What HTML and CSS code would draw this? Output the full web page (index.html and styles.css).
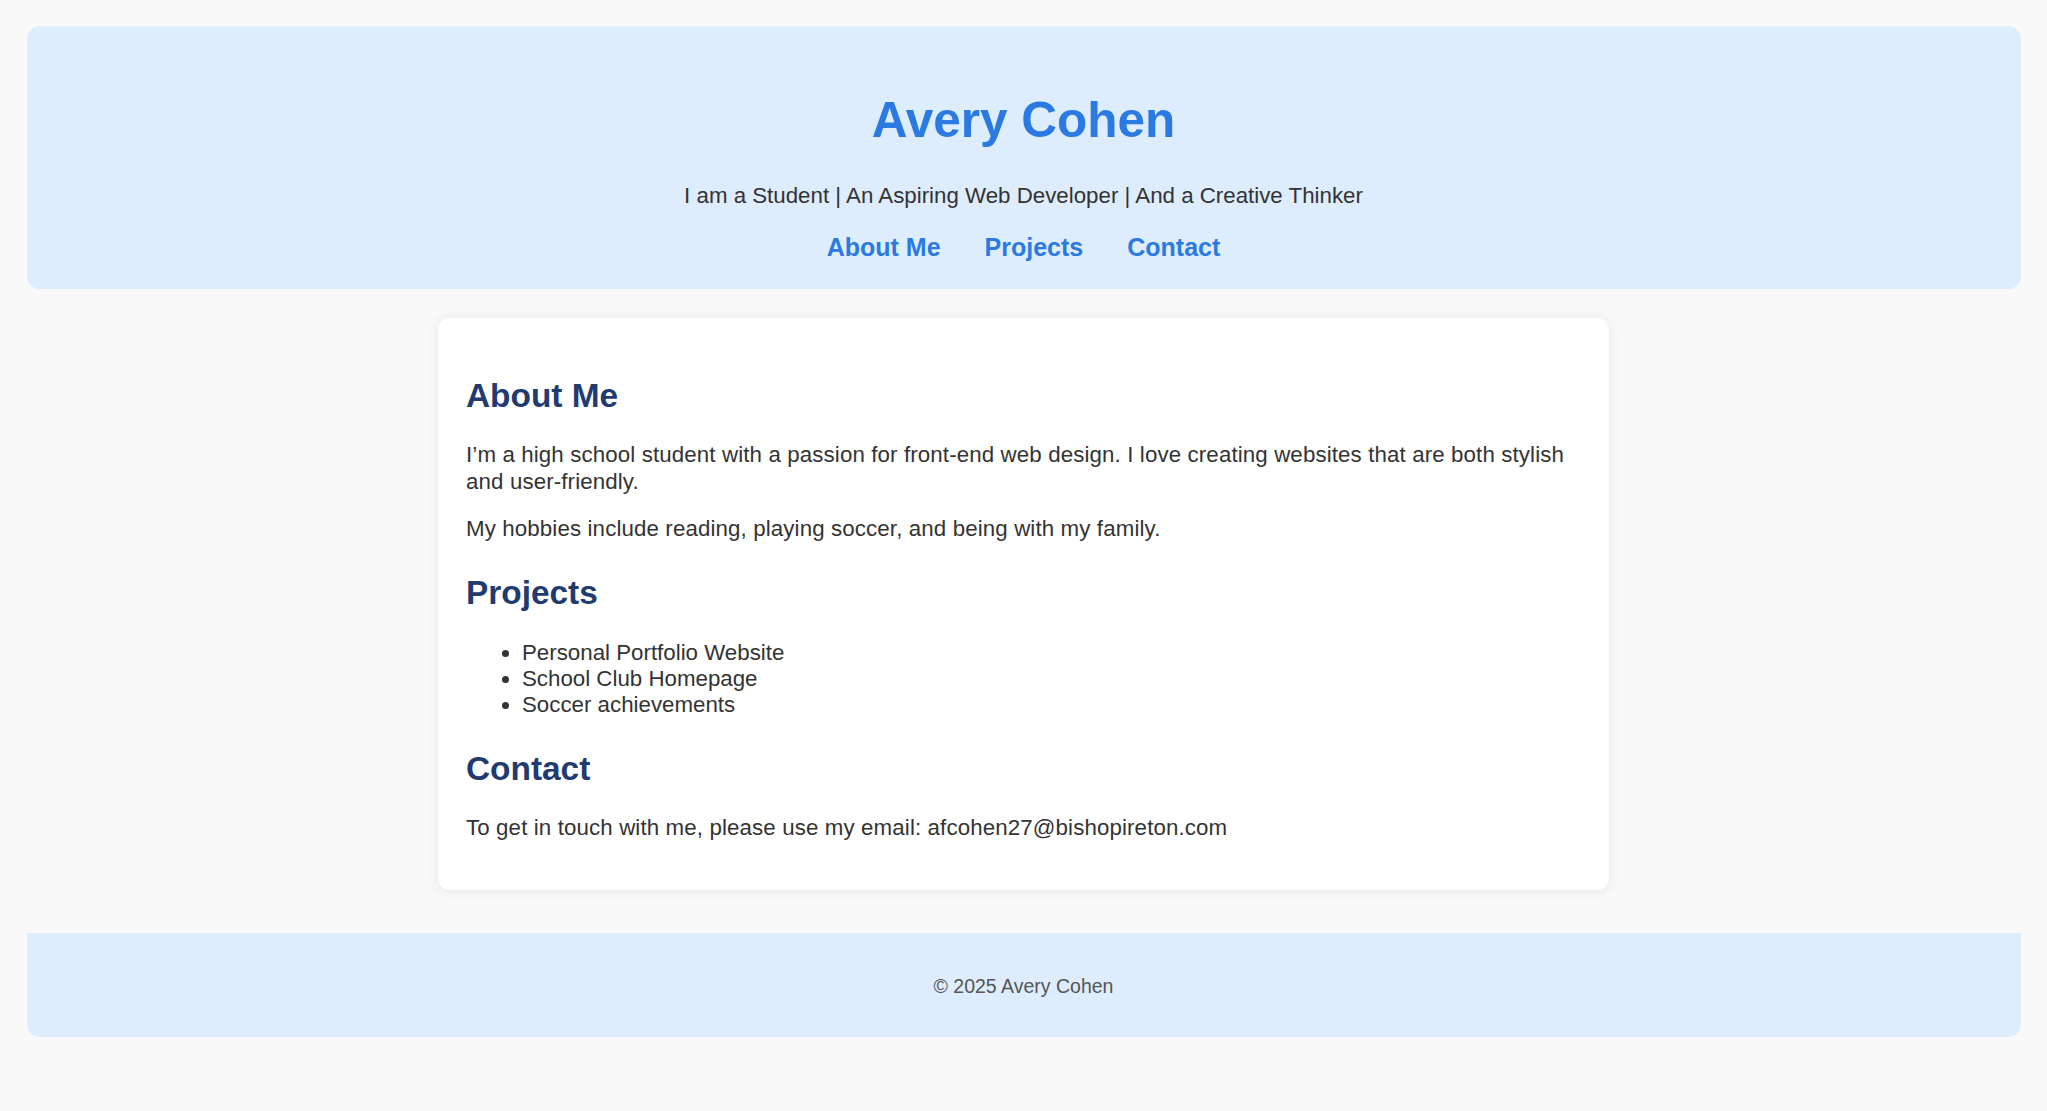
FILE: index.html
```html
<!DOCTYPE html>
<html lang="en">
<head>
<meta charset="utf-8">
<title>Avery Cohen</title>
<link rel="stylesheet" href="styles.css">
</head>
<body>
<header class="site-header">
  <h1 class="name">Avery Cohen</h1>
  <p class="tagline">I am a Student | An Aspiring Web Developer | And a Creative Thinker</p>
  <nav class="nav">
    <a href="#about">About Me</a>
    <a href="#projects">Projects</a>
    <a href="#contact">Contact</a>
  </nav>
</header>
<main class="card">
  <section id="about">
    <h2 class="section-title">About Me</h2>
    <p class="text">I’m a high school student with a passion for front-end web design. I love creating websites that are both stylish and user-friendly.</p>
    <p class="text">My hobbies include reading, playing soccer, and being with my family.</p>
  </section>
  <section id="projects">
    <h2 class="section-title">Projects</h2>
    <ul class="list">
      <li>Personal Portfolio Website</li>
      <li>School Club Homepage</li>
      <li>Soccer achievements</li>
    </ul>
  </section>
  <section id="contact">
    <h2 class="section-title">Contact</h2>
    <p class="text">To get in touch with me, please use my email: afcohen27@bishopireton.com</p>
  </section>
</main>
<footer class="site-footer">
  <p class="copy">© 2025 Avery Cohen</p>
</footer>
</body>
</html>
```

FILE: styles.css
```css
html, body {
  background: #f9f9f9;
}
body {
  margin: 26px 26.5px;
  font-family: "Liberation Sans", Arial, Helvetica, sans-serif;
  font-size: 22.3px;
  line-height: 26.5px;
  color: #333;
}
.site-header {
  background: #deedfe;
  border-radius: 13px;
  padding: 26px 26px 26.7px;
  text-align: center;
}
.name {
  margin: 39px 0 35px;
  font-size: 49.5px;
  line-height: 57px;
  font-weight: bold;
  color: #2a7ae2;
}
.tagline {
  margin: 0 0 22.8px;
}
.nav {
  display: flex;
  justify-content: center;
  gap: 44px;
  font-size: 25px;
  line-height: 30px;
  font-weight: bold;
}
.nav a {
  color: #2a7ae2;
  text-decoration: none;
}
.card {
  box-sizing: border-box;
  width: 1171px;
  margin: 29px auto 43px;
  padding: 27px 28px 27.5px;
  background: #fff;
  border-radius: 12px;
  box-shadow: 0 1px 13px rgba(0, 0, 0, 0.08);
}
.section-title {
  margin: 31.8px 0 27.6px;
  font-size: 33.4px;
  line-height: 38px;
  font-weight: bold;
  color: #1f3b70;
}
.text {
  margin: 20.8px 0;
  letter-spacing: 0.12px;
}
.list {
  margin: 20.8px 0;
  padding-left: 56px;
  line-height: 26px;
}
.site-footer {
  background: #deedfe;
  border-radius: 0 0 13px 13px;
  padding: 41.7px 0 39.3px;
  text-align: center;
}
.copy {
  margin: 0;
  font-size: 19.5px;
  line-height: 23px;
  color: #555;
}
```
